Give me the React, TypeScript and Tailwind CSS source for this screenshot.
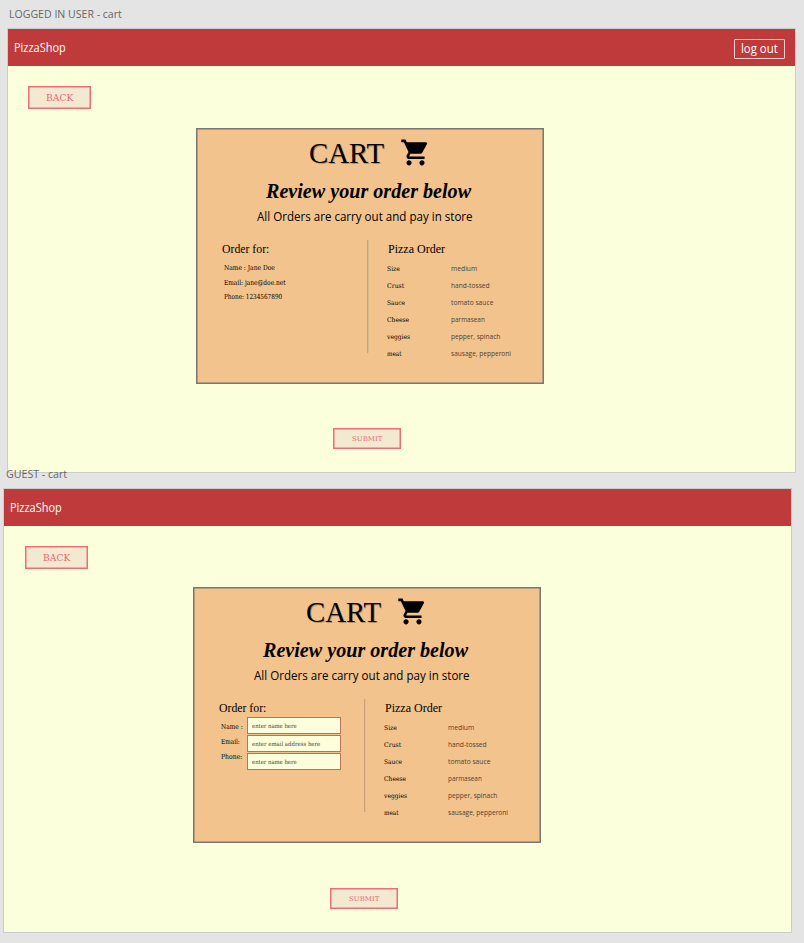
import { useLayoutEffect, useRef, useState } from 'react';

const sans = "font-['Open_Sans','Noto_Sans',sans-serif]";
const slab = "font-['DejaVu_Serif',serif]";
const roman = "font-['Liberation_Serif',serif]";

/* A single line of text condensed or widened to fill a given width. */
function Fit({ width, className = '', children }: { width: number; className?: string; children: string }) {
  const ref = useRef<HTMLSpanElement>(null);
  const [scale, setScale] = useState(1);
  useLayoutEffect(() => {
    if (ref.current) setScale(width / ref.current.offsetWidth);
  }, [width, children]);
  return (
    <span className={`block shrink-0 text-left whitespace-nowrap ${className}`} style={{ width }}>
      <span ref={ref} className="inline-block origin-left" style={{ transform: `scaleX(${scale})` }}>
        {children}
      </span>
    </span>
  );
}

function CartIcon() {
  return (
    <svg viewBox="0 0 24 24" className="h-[31px] w-[31px] shrink-0 fill-black">
      <path d="M7 18c-1.1 0-1.99.9-1.99 2S5.9 22 7 22s2-.9 2-2-.9-2-2-2zM1 2v2h2l3.6 7.59-1.35 2.45c-.16.28-.25.61-.25.96 0 1.1.9 2 2 2h12v-2H7.42c-.14 0-.25-.11-.25-.25l.03-.12.9-1.63h7.45c.75 0 1.41-.41 1.75-1.03l3.58-6.49A1.003 1.003 0 0 0 20 4H5.21l-.94-2H1zm16 16c-1.1 0-1.99.9-1.99 2s.89 2 1.99 2 2-.9 2-2-.9-2-2-2z" />
    </svg>
  );
}

const items: [string, number, string, number][] = [
  ['Size', 13, 'medium', 26],
  ['Crust', 17, 'hand-tossed', 39],
  ['Sauce', 18, 'tomato sauce', 42],
  ['Cheese', 22, 'parmasean', 34],
  ['veggies', 23, 'pepper, spinach', 49],
  ['meat', 15, 'sausage, pepperoni', 60],
];

function UserDetails() {
  return (
    <div className={`mt-[4px] ml-[2px] text-[7px] leading-[14.5px] text-black ${slab}`}>
      <Fit width={51}>Name : Jane Doe</Fit>
      <Fit width={62}>Email: jane@doe.net</Fit>
      <Fit width={58}>Phone: 1234567890</Fit>
    </div>
  );
}

function GuestForm() {
  const fields: [string, number][] = [
    ['enter name here', 45],
    ['enter email address here', 68],
    ['enter name here', 45],
  ];
  return (
    <div className={`mt-px ml-[2px] flex text-black ${slab}`}>
      <div className="mt-[3px] w-[26px] text-[7px] leading-[15px]">
        <Fit width={22}>Name :</Fit>
        <Fit width={19}>Email:</Fit>
        <Fit width={21}>Phone:</Fit>
      </div>
      <div className="flex flex-col gap-px">
        {fields.map(([text, width], i) => (
          <div key={i} className="flex h-[17px] w-[94px] items-center border border-[#c0705a] bg-[#fbffdb] pl-1">
            <Fit width={width} className="text-[6px] leading-[8px] text-[#4a4030]">{text}</Fit>
          </div>
        ))}
      </div>
    </div>
  );
}

function CartCard({ guest }: { guest: boolean }) {
  return (
    <section className="flex h-[256px] w-[348px] flex-col border border-[#777777] bg-[#f2c38d] shadow-[inset_0_0_0_0.5px_#777777]">
      <div className="mt-[7px] ml-[112px] flex h-[32px] items-center">
        <Fit width={75} className={`mr-[16px] pt-px text-[30px] leading-[32px] text-black [text-shadow:1px_1px_0_#00000040] ${roman}`}>CART</Fit>
        <CartIcon />
      </div>
      <Fit width={205} className={`mt-[9px] ml-[69px] text-[21px] leading-[28px] font-bold italic text-black ${roman}`}>
        Review your order below
      </Fit>
      <Fit width={216} className={`mt-[3px] ml-[60px] text-[12px] leading-[18px] text-black ${sans}`}>
        All Orders are carry out and pay in store
      </Fit>
      <div className="mt-[14px] flex">
        <div className="w-[170px] pl-[25px]">
          <Fit width={47} className={`mt-px text-[12px] leading-[16px] text-black ${roman}`}>Order for:</Fit>
          {guest ? <GuestForm /> : <UserDetails />}
        </div>
        <div className="h-[113px] w-px bg-[#c9a27c] shadow-[1px_0_0_#debb8e]" />
        <div className="pl-[19px]">
          <Fit width={57} className={`ml-[1px] text-[12px] leading-[18px] text-black ${roman}`}>Pizza Order</Fit>
          <div className="mt-[2px]">
            {items.map(([name, nameWidth, value, valueWidth]) => (
              <div key={name} className="flex h-[17px] items-center">
                <div className="w-[64px]">
                  <Fit width={nameWidth} className={`text-[6.5px] leading-[10px] text-black ${slab}`}>{name}</Fit>
                </div>
                <Fit width={valueWidth} className={`text-[7px] leading-[10px] text-[#4f4232] ${sans}`}>{value}</Fit>
              </div>
            ))}
          </div>
        </div>
      </div>
    </section>
  );
}

function Artboard({ guest = false }: { guest?: boolean }) {
  return (
    <article className="flex h-[445px] w-[789px] flex-col border border-[#cccccc] bg-[#fbffdb]">
      <header className="flex h-[37px] shrink-0 items-center justify-between bg-[#be3a3b] pr-[10px] pl-[6px] text-white">
        <Fit width={52} className={`pt-px text-[12px] leading-[16px] font-medium ${sans}`}>PizzaShop</Fit>
        {!guest && (
          <button className="mt-[2px] flex h-[20px] w-[51px] items-center justify-center rounded-[1px] border border-[#f3cccc]">
            <Fit width={37} className={`text-[12px] leading-[16px] font-medium ${sans}`}>log out</Fit>
          </button>
        )}
      </header>
      <div className={`flex flex-col items-start ${guest ? 'pl-[21px]' : 'pl-[20px]'}`}>
        <button className="mt-[20px] flex h-[23px] w-[63px] items-center justify-center border-[1.5px] border-[#ec6f78] bg-[#f2e9d0] shadow-[inset_0_0_0_0.5px_#ec6f78]">
          <Fit width={27} className={`pt-px text-[8.5px] leading-[12px] text-[#ea6673] ${slab}`}>BACK</Fit>
        </button>
        <div className={guest ? 'mt-[18px] mb-px ml-[168px]' : 'mt-[19px] ml-[168px]'}>
          <CartCard guest={guest} />
        </div>
        <button className="mt-[44px] ml-[305px] flex h-[21px] w-[68px] items-center justify-center border-[1.5px] border-[#ec6f78] bg-[#f2e9d0] shadow-[inset_0_0_0_0.5px_#ec6f78]">
          <Fit width={30} className={`text-[6.5px] leading-[10px] text-[#ea6673] ${slab}`}>SUBMIT</Fit>
        </button>
      </div>
    </article>
  );
}

export default function App() {
  return (
    <main className="h-[943px] w-[804px] overflow-hidden bg-[#e4e4e4]">
      <div className="h-[28px] pt-[6px] pl-[9px]">
        <Fit width={113} className={`text-[11.5px] leading-[16px] text-[#666666] ${sans}`}>LOGGED IN USER - cart</Fit>
      </div>
      <div className="ml-[7px]">
        <Artboard />
      </div>
      <div className="relative -mt-[7px] h-[22px] pl-[6px]">
        <Fit width={61} className={`text-[11.5px] leading-[16px] text-[#666666] ${sans}`}>GUEST - cart</Fit>
      </div>
      <div className="ml-[3px]">
        <Artboard guest />
      </div>
    </main>
  );
}
